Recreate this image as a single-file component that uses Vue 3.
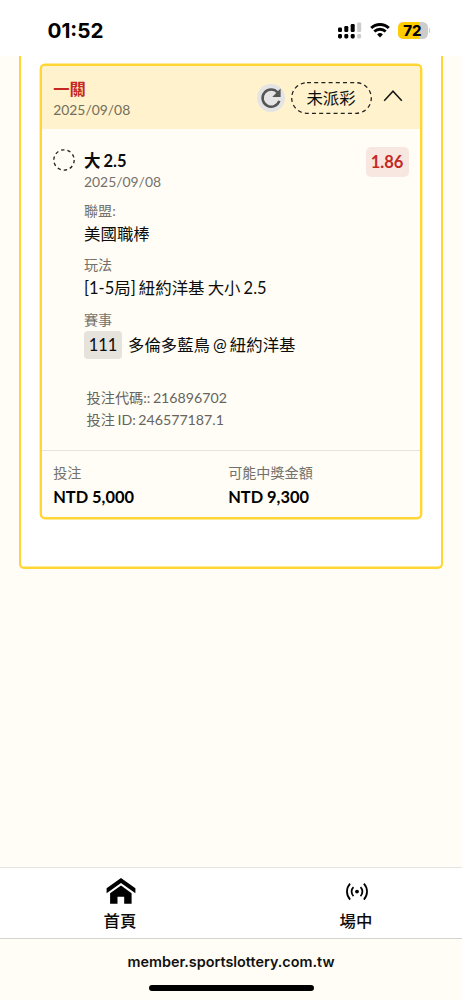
<template>
  <div class="screen">
    <header class="status-bar">
      <span class="clock">01:52</span>
      <div class="status-icons">
        <svg class="signal" viewBox="0 0 24 17" width="24" height="17">
          <g v-for="(bar, index) in signalBars" :key="index" :fill="bar.on ? '#000' : '#ccc'">
            <rect :x="bar.x" :y="bar.y" width="4" :height="10 - bar.y" rx="1.2" />
            <rect :x="bar.x" y="12" width="4" height="4.4" rx="1.4" />
          </g>
        </svg>
        <svg class="wifi" viewBox="0 0 20 15" width="20" height="15">
          <path d="M1.2 5.1a12.6 12.6 0 0 1 17.6 0" />
          <path d="M4.3 8.6a8.1 8.1 0 0 1 11.4 0" />
          <path class="wifi-dot" d="M10 14.4 7.1 11.5a4.2 4.2 0 0 1 5.8 0z" />
        </svg>
        <div class="battery">
          <div class="battery-body">
            <div class="battery-level" :style="{ width: battery + '%' }" />
            <span class="battery-text">{{ battery }}</span>
          </div>
          <div class="battery-cap" />
        </div>
      </div>
    </header>

    <main class="content">
      <section class="panel">
        <article class="ticket">
          <div class="ticket-header">
            <div class="ticket-title">
              <p class="parlay">一關</p>
              <p class="date">2025/09/08</p>
            </div>
            <button class="refresh">
              <svg viewBox="0 0 28 28" width="28" height="28">
                <path class="refresh-arc" d="M22.3 16.8A8.6 8.6 0 1 1 20.6 8.4" />
                <path class="refresh-tip" d="M23.6 4.6v8.3h-8.3z" />
              </svg>
            </button>
            <span class="state">
              <svg class="state-outline" viewBox="0 0 81 32" width="81" height="32">
                <rect x="0.7" y="0.7" width="79.6" height="30.6" rx="15.3" />
              </svg>
              <span class="state-text">未派彩</span>
            </span>
            <svg class="chevron" viewBox="0 0 20 12" width="20" height="12">
              <path d="M1.2 10.8 10 1.3l8.8 9.5" />
            </svg>
          </div>

          <div class="ticket-body">
            <svg class="pending" viewBox="0 0 22 22" width="22" height="22">
              <circle cx="11" cy="11" r="10.2" />
            </svg>
            <div class="bet">
              <p class="selection">大 2.5</p>
              <p class="date">2025/09/08</p>
              <p class="label first">聯盟:</p>
              <p class="value">美國職棒</p>
              <p class="label">玩法</p>
              <p class="value">[1-5局] 紐約洋基 大小 2.5</p>
              <p class="label">賽事</p>
              <div class="event">
                <span class="event-code">111</span>
                <span class="event-name">多倫多藍鳥 @ 紐約洋基</span>
              </div>
              <div class="ids">
                <p>投注代碼:: 216896702</p>
                <p>投注 ID: 246577187.1</p>
              </div>
            </div>
            <span class="odds">1.86</span>
          </div>

          <div class="ticket-footer">
            <div v-for="item in totals" :key="item.label" class="total">
              <p class="total-label">{{ item.label }}</p>
              <p class="total-amount">{{ item.amount }}</p>
            </div>
          </div>
        </article>
      </section>
    </main>

    <nav class="tabs">
      <a class="tab">
        <svg viewBox="0 0 30 26" width="30" height="26">
          <path d="M15 0 .6 10.3v5L15 5l14.4 10.3v-5z" />
          <path d="M15 7.4 4.1 15.3v10.5h7.4v-7h6.7v7h7.4V15.3z" />
        </svg>
        <span>首頁</span>
      </a>
      <a class="tab">
        <svg class="live" viewBox="0 0 24 26" width="24" height="26">
          <circle cx="12" cy="13.6" r="1.9" />
          <path d="M8.5 9.1a6.2 6.2 0 0 0 0 9M15.5 9.1a6.2 6.2 0 0 1 0 9M5.1 5.6a11.8 11.8 0 0 0 0 16M18.9 5.6a11.8 11.8 0 0 1 0 16" />
        </svg>
        <span>場中</span>
      </a>
    </nav>

    <footer class="browser-bar">
      <span class="address">member.sportslottery.com.tw</span>
      <div class="home-indicator" />
    </footer>
  </div>
</template>

<script setup>
const battery = 72;

const signalBars = [
  { x: 0, y: 5.5, on: true },
  { x: 6.3, y: 4, on: true },
  { x: 12.7, y: 2, on: true },
  { x: 19.2, y: 0.5, on: false },
];

const totals = [
  { label: "投注", amount: "NTD 5,000" },
  { label: "可能中獎金額", amount: "NTD 9,300" },
];
</script>

<style>
body {
  background: #fffdf5;
}
</style>

<style scoped>
.screen {
  display: flex;
  flex-direction: column;
  height: 1000px;
  overflow: hidden;
  background: #fffdf5;
  color: #0c0c0c;
  font-family: Lato, "Noto Sans CJK TC", sans-serif;
}

.screen * {
  box-sizing: border-box;
}

p {
  margin: 0;
  white-space: nowrap;
}

/* status bar */
.status-bar {
  flex: none;
  display: flex;
  justify-content: space-between;
  height: 56px;
  padding: 18px 32px 0 47.5px;
  background: #fff;
}

.clock {
  height: 26px;
  color: #000;
  font: 700 20.7px/26px Inter, sans-serif;
}

.status-icons {
  display: flex;
  align-items: flex-start;
  padding-top: 4px;
}

.signal {
  margin-right: 8px;
}

.wifi {
  margin-right: 8px;
  margin-top: 1px;
  fill: none;
  stroke: #000;
  stroke-width: 2.8;
}

.wifi .wifi-dot {
  fill: #000;
  stroke: none;
}

.battery {
  display: flex;
  align-items: center;
  gap: 1px;
}

.battery-body {
  position: relative;
  width: 30px;
  height: 17px;
  border-radius: 5.5px;
  overflow: hidden;
  background: #ccc;
}

.battery-level {
  height: 100%;
  background: #ffcc00;
}

.battery-text {
  position: absolute;
  inset: 0;
  color: #000;
  font: 800 15px/17px Inter, sans-serif;
  text-align: center;
}

.battery-cap {
  width: 1.5px;
  height: 5px;
  border-radius: 0 2px 2px 0;
  background: #ccc;
}

/* ticket */
.content {
  flex: 1;
  padding: 0 19px;
}

.panel {
  height: 513px;
  padding: 8px 19px 0;
  border: 2px solid #ffd633;
  border-top: 0;
  border-radius: 0 0 5px 5px;
  background: #fff;
  box-shadow: inset 0 -0.4px 0 #ffd633;
}

.ticket {
  height: 455px;
  margin-right: 0.5px;
  border: 2px solid #ffd633;
  border-radius: 5px;
  overflow: hidden;
  background: #fffdf5;
  box-shadow: 0 0 0 0.4px #ffd633;
}

.ticket-header {
  display: flex;
  align-items: center;
  height: 63px;
  padding: 0 17px 0 11.2px;
  background: #fff2cc;
}

.ticket-title {
  flex: 1;
  padding-top: 2px;
}

.parlay {
  height: 21px;
  color: #c4281f;
  font-size: 16.3px;
  font-weight: 700;
  line-height: 21px;
}

.date {
  height: 21px;
  color: #73716b;
  font-size: 13.9px;
  line-height: 21px;
}

.ticket-title .date {
  color: #736d5c;
}

.refresh {
  width: 28px;
  height: 28px;
  margin-right: 6px;
  padding: 0;
  border: 0;
  border-radius: 50%;
  background: #e4e4e4;
}

.refresh svg {
  display: block;
}

.refresh-arc {
  fill: none;
  stroke: #555;
  stroke-width: 2.5;
}

.refresh-tip {
  fill: #555;
}

.state {
  position: relative;
  width: 81px;
  height: 32px;
  margin-right: 11px;
  font-size: 16.4px;
  line-height: 32px;
  text-align: center;
}

.state-outline {
  position: absolute;
  inset: 0;
  fill: none;
  stroke: #222;
  stroke-width: 1.3;
  stroke-dasharray: 4 3.2;
}

.chevron {
  margin-bottom: 3px;
  fill: none;
  stroke: #1a1a1a;
  stroke-width: 1.6;
}

.ticket-body {
  display: flex;
  align-items: flex-start;
  height: 322px;
  padding: 18px 11px 0;
  border-bottom: 1px solid #e6e3dd;
}

.pending {
  margin: 2px 9px 0 0;
  fill: none;
  stroke: #222;
  stroke-width: 1.3;
  stroke-dasharray: 3.4 3;
}

.bet {
  flex: 1;
  padding-top: 2px;
  word-spacing: -1.1px;
}

.selection {
  height: 24px;
  font-size: 16.5px;
  font-weight: 700;
  line-height: 24px;
}

.bet .date {
  margin-top: -2px;
}

.label {
  height: 20px;
  margin-top: 9.5px;
  color: #73716b;
  font-size: 14.1px;
  line-height: 20px;
}

.label.first {
  margin-top: 8.5px;
}

.value {
  height: 24px;
  margin-top: 1px;
  font-size: 16.45px;
  line-height: 24px;
}

.event {
  display: flex;
  align-items: center;
  gap: 6px;
  margin-top: 1.5px;
  font-size: 16.4px;
  line-height: 28px;
  white-space: nowrap;
}

.event-code {
  width: 38px;
  height: 28px;
  border-radius: 4px;
  background: #e6e2dc;
  text-align: center;
}

.event-name {
  height: 28px;
}

.ids {
  padding: 28px 0 0 2.5px;
  color: #66645f;
  font-size: 14.2px;
  line-height: 21.5px;
}

.ids p {
  height: 21.5px;
}

.odds {
  width: 43px;
  height: 30px;
  border-radius: 5px;
  background: #f8e7e0;
  color: #c4281f;
  font-size: 16.5px;
  font-weight: 700;
  line-height: 31px;
  text-align: center;
}

.ticket-footer {
  display: grid;
  grid-template-columns: 175px 1fr;
  padding: 11px 11.2px 0;
}

.total-label {
  height: 22px;
  color: #73716b;
  font-size: 14.1px;
  line-height: 22px;
}

.total-amount {
  height: 24px;
  color: #000;
  font-size: 16.4px;
  font-weight: 700;
  line-height: 25px;
}

/* bottom bars */
.tabs {
  flex: none;
  display: grid;
  grid-template-columns: 236px 236px;
  height: 72px;
  padding-left: 2px;
  border-top: 1px solid #e7e5e1;
  border-bottom: 1px solid #d5d4cf;
  background: #fff;
}

.tab {
  display: flex;
  flex-direction: column;
  align-items: center;
  padding-top: 10px;
  font-size: 16.4px;
  font-weight: 500;
}

.tab svg {
  flex: none;
  margin-left: 1px;
  fill: #000;
}

.tab span {
  height: 28px;
  margin-top: 2px;
  line-height: 29px;
}

.live path {
  fill: none;
  stroke: #000;
  stroke-width: 1.8;
}

.browser-bar {
  flex: none;
  display: flex;
  flex-direction: column;
  align-items: center;
  height: 61px;
  padding-top: 13px;
}

.address {
  height: 20px;
  color: #111;
  font: 600 14.4px/20px Inter, sans-serif;
}

.home-indicator {
  width: 165px;
  height: 6px;
  margin-top: 12.5px;
  border-radius: 3px;
  background: #000;
}
</style>
